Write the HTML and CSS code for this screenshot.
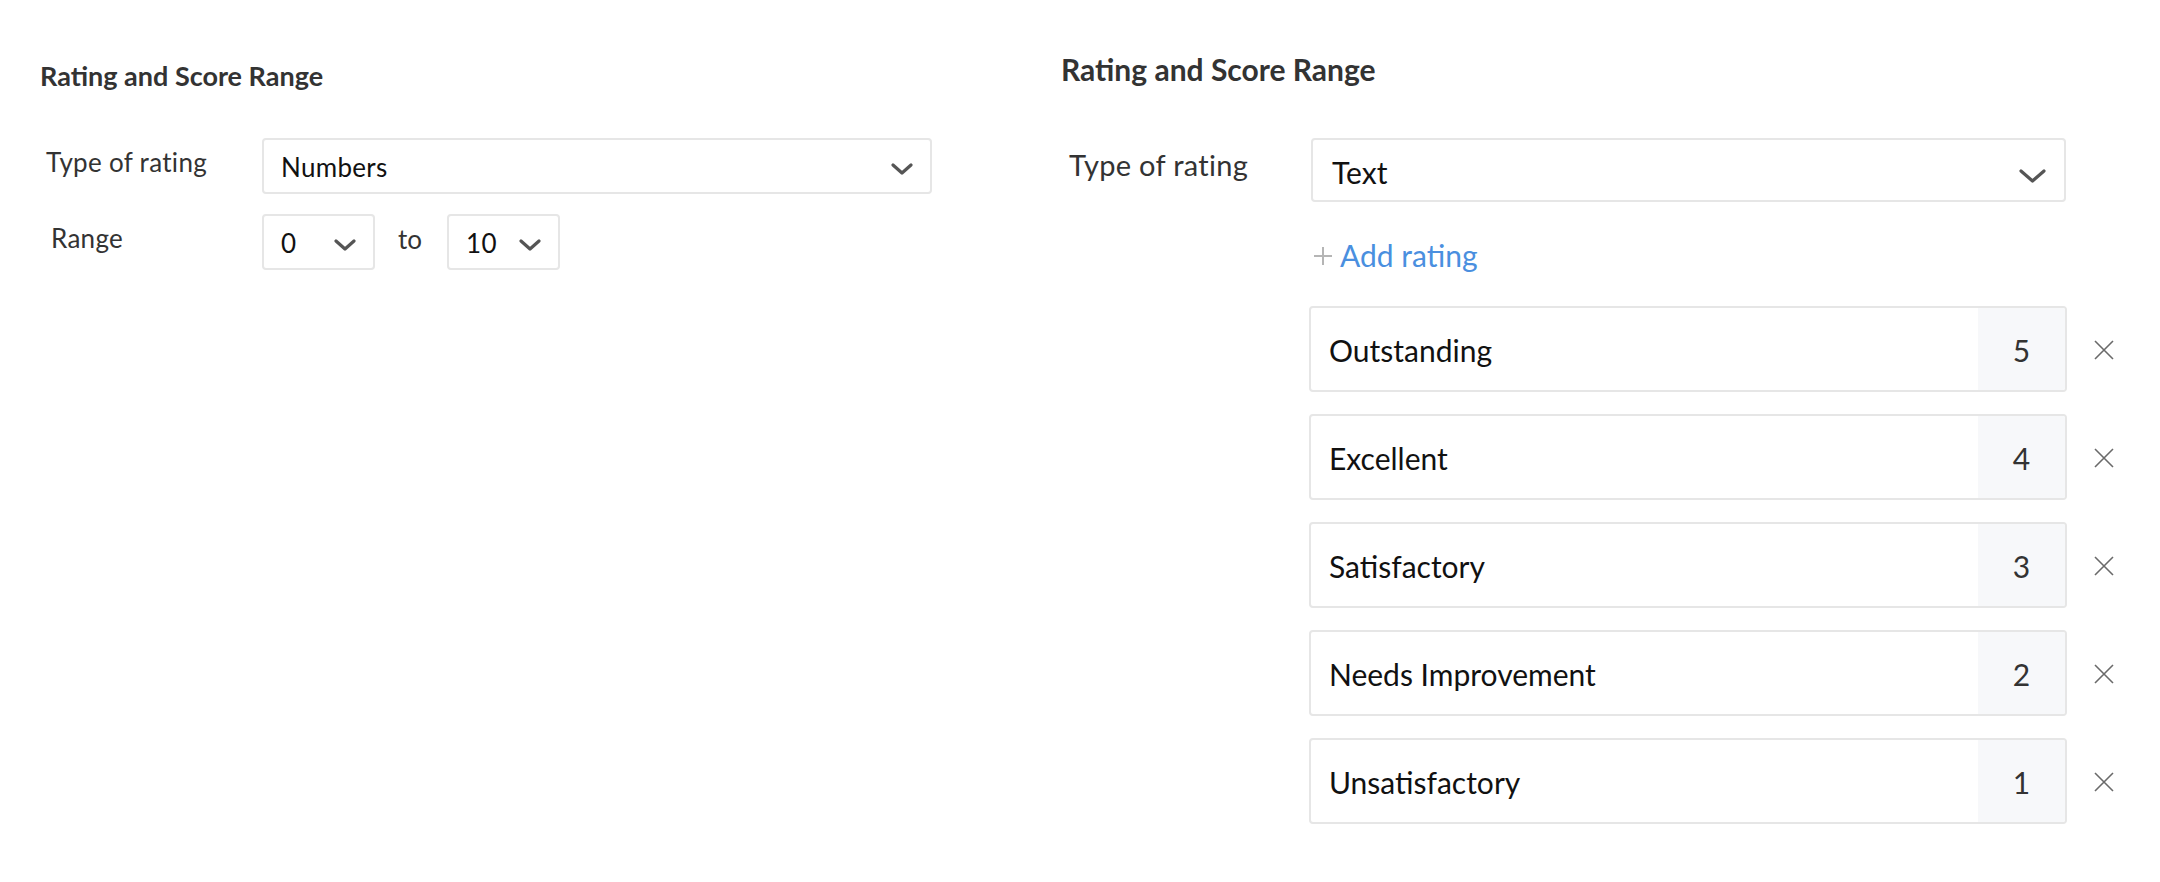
FILE: index.html
```html
<!DOCTYPE html>
<html lang="en">
<head>
    <meta charset="UTF-8">
    <meta name="viewport" content="width=device-width, initial-scale=1.0">
    <title>Rating and Score Range</title>
    <link rel="stylesheet" href="styles.css">
</head>
<body>
    <div class="page">
        <!-- Numbers rating -->
        <section class="panel panel-numbers">
            <h2 class="panel-title">Rating and Score Range</h2>

            <div class="field">
                <label class="field-label">Type of rating</label>
                <div class="select select-wide">
                    <span class="select-value">Numbers</span>
                    <svg class="chevron" width="22" height="12" viewBox="0 0 22 12"><polyline points="2,2 11,10 20,2"/></svg>
                </div>
            </div>

            <div class="field field-range">
                <label class="field-label range-label">Range</label>
                <div class="select select-small">
                    <span class="select-value">0</span>
                    <svg class="chevron" width="22" height="12" viewBox="0 0 22 12"><polyline points="2,2 11,10 20,2"/></svg>
                </div>
                <span class="range-to">to</span>
                <div class="select select-small">
                    <span class="select-value">10</span>
                    <svg class="chevron" width="22" height="12" viewBox="0 0 22 12"><polyline points="2,2 11,10 20,2"/></svg>
                </div>
            </div>
        </section>

        <!-- Text rating -->
        <section class="panel panel-text">
            <h2 class="panel-title">Rating and Score Range</h2>

            <div class="field">
                <label class="field-label">Type of rating</label>
                <div class="select select-text">
                    <span class="select-value">Text</span>
                    <svg class="chevron" width="27" height="14" viewBox="0 0 27 14"><polyline points="2,2 13.5,12 25,2"/></svg>
                </div>
            </div>

            <a class="add-rating" href="#">
                <svg class="add-plus" width="18" height="18" viewBox="0 0 18 18"><path d="M9 0V18M0 9H18"/></svg>
                Add rating
            </a>

            <div class="rating-list">
                <div class="rating-row">
                    <div class="rating-box"><span class="rating-name">Outstanding</span><span class="rating-score">5</span></div>
                    <svg class="remove" width="20" height="20" viewBox="0 0 20 20"><path d="M1 1L19 19M19 1L1 19"/></svg>
                </div>
                <div class="rating-row">
                    <div class="rating-box"><span class="rating-name">Excellent</span><span class="rating-score">4</span></div>
                    <svg class="remove" width="20" height="20" viewBox="0 0 20 20"><path d="M1 1L19 19M19 1L1 19"/></svg>
                </div>
                <div class="rating-row">
                    <div class="rating-box"><span class="rating-name">Satisfactory</span><span class="rating-score">3</span></div>
                    <svg class="remove" width="20" height="20" viewBox="0 0 20 20"><path d="M1 1L19 19M19 1L1 19"/></svg>
                </div>
                <div class="rating-row">
                    <div class="rating-box"><span class="rating-name">Needs Improvement</span><span class="rating-score">2</span></div>
                    <svg class="remove" width="20" height="20" viewBox="0 0 20 20"><path d="M1 1L19 19M19 1L1 19"/></svg>
                </div>
                <div class="rating-row">
                    <div class="rating-box"><span class="rating-name">Unsatisfactory</span><span class="rating-score">1</span></div>
                    <svg class="remove" width="20" height="20" viewBox="0 0 20 20"><path d="M1 1L19 19M19 1L1 19"/></svg>
                </div>
            </div>
        </section>
    </div>
</body>
</html>
```

FILE: styles.css
```css
body {
    margin: 0;
    padding: 0;
    background-color: #ffffff;
    font-family: Lato, "Open Sans", sans-serif;
    color: #333;
    line-height: 1.2;
}
.page {
    display: flex;
    align-items: flex-start;
}
.panel {
    box-sizing: border-box;
}
.panel-title {
    margin: 0;
    font-weight: 700;
    color: #333;
}
.field {
    display: flex;
    align-items: flex-start;
}
.field-label {
    box-sizing: border-box;
    flex: none;
    color: #333;
}
.select {
    box-sizing: border-box;
    display: flex;
    align-items: flex-start;
    justify-content: space-between;
    border: 2px solid #e6e6e6;
    border-radius: 4px;
    background-color: #fff;
    color: #111;
}
.chevron {
    flex: none;
}
.chevron polyline {
    fill: none;
    stroke: #555;
    stroke-width: 3.2;
    stroke-linecap: round;
    stroke-linejoin: round;
}

/* left panel */
.panel-numbers {
    width: 1061px;
    padding: 60px 0 0 40px;
}
.panel-numbers .panel-title {
    font-size: 27px;
    margin-bottom: 46px;
}
.panel-numbers .field-label {
    width: 222px;
    padding: 9px 0 0 6px;
    font-size: 26px;
    letter-spacing: 0.3px;
}
.panel-numbers .range-label {
    padding: 9px 0 0 11px;
}
.panel-numbers .select {
    height: 56px;
    font-size: 26px;
    letter-spacing: 0.3px;
    padding: 12px 17px 0 17px;
}
.panel-numbers .chevron {
    margin-top: 11px;
}
.select-wide {
    width: 670px;
}
.field-range {
    margin-top: 20px;
}
.select-small {
    width: 113px;
}
.range-to {
    font-size: 26px;
    padding: 10px 0 0 0;
    width: 72px;
    text-indent: 23px;
}

/* right panel */
.panel-text {
    flex: 1;
    padding-top: 51px;
}
.panel-text .panel-title {
    font-size: 30px;
    margin-bottom: 51px;
}
.panel-text .field-label {
    width: 250px;
    padding: 10px 0 0 8px;
    font-size: 29px;
    letter-spacing: 0.3px;
}
.select-text {
    width: 755px;
    height: 64px;
    font-size: 30px;
    padding: 14px 18px 0 19px;
}
.select-text .chevron {
    margin-top: 15px;
}
.add-rating {
    display: inline-flex;
    align-items: center;
    margin: 35px 0 0 253px;
    font-size: 30px;
    color: #4a8fdf;
    text-decoration: none;
}
.add-plus {
    margin-right: 8px;
    margin-top: 2px;
}
.add-plus path {
    stroke: #b5b5b5;
    stroke-width: 2;
    fill: none;
}
.rating-list {
    margin: 33px 0 0 248px;
    display: flex;
    flex-direction: column;
    gap: 22px;
}
.rating-row {
    display: flex;
    align-items: center;
}
.rating-box {
    box-sizing: border-box;
    width: 758px;
    height: 86px;
    display: flex;
    border: 2px solid #e6e6e6;
    border-radius: 4px;
    overflow: hidden;
    font-size: 30px;
    color: #111;
}
.rating-name {
    flex: 1;
    padding: 24px 0 0 18px;
}
.rating-score {
    width: 87px;
    background-color: #f7f8fa;
    text-align: center;
    padding-top: 24px;
    color: #333;
}
.remove {
    margin-left: 27px;
    margin-top: 2px;
}
.remove path {
    stroke: #6a6a6a;
    stroke-width: 1.6;
    fill: none;
}
```
